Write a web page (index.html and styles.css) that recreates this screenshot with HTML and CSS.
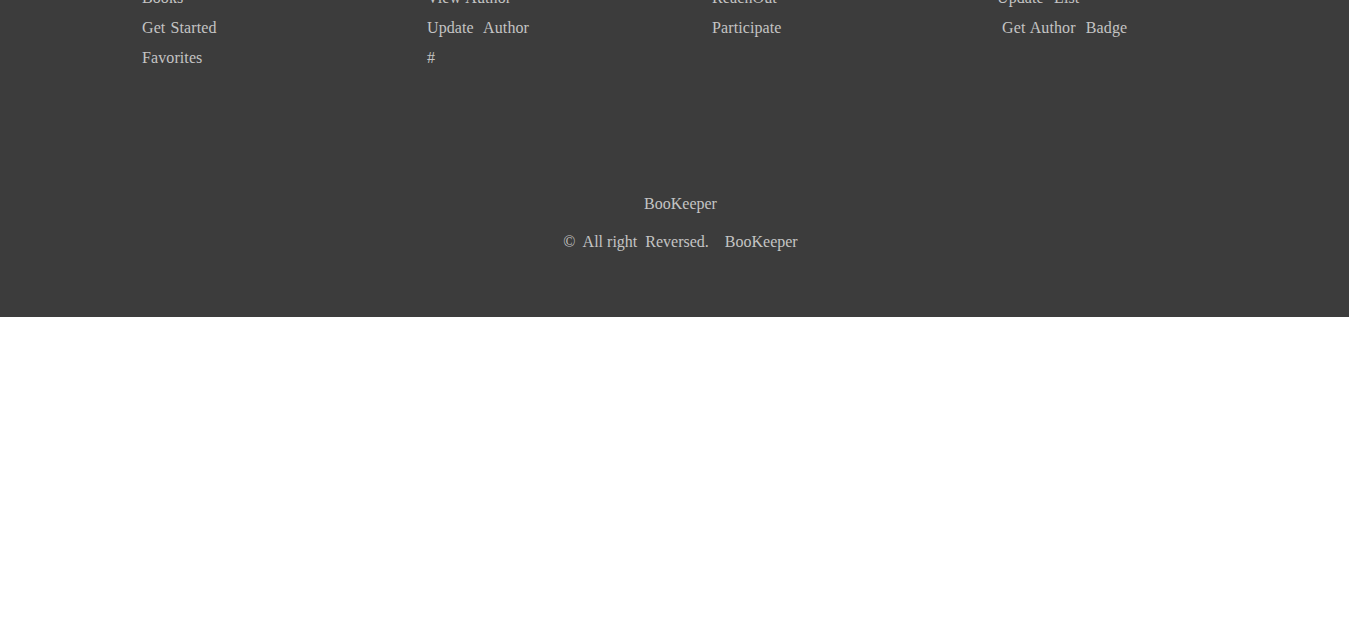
FILE: index.html
```html
<!DOCTYPE html>
<html lang="en">
<head>
<meta charset="utf-8">
<title>BooKeeper</title>
<link rel="stylesheet" href="styles.css">
</head>
<body>
<footer class="footer">
  <div class="links">
    <ul class="col">
      <li>Books</li>
      <li>Get Started</li>
      <li>Favorites</li>
    </ul>
    <ul class="col">
      <li>View Author</li>
      <li>Update&nbsp; Author</li>
      <li>#</li>
    </ul>
    <ul class="col">
      <li>ReachOut</li>
      <li>Participate</li>
    </ul>
    <ul class="col">
      <li>Update&nbsp; List</li>
      <li>&nbsp;Get Author&nbsp; Badge</li>
    </ul>
  </div>
  <div class="bottom">
    <p class="brand">BooKeeper</p>
    <p class="copy">&copy;&nbsp; All right&nbsp; Reversed. &nbsp;&nbsp; BooKeeper</p>
  </div>
</footer>
</body>
</html>
```
FILE: styles.css
```css
html, body {
  margin: 0;
  padding: 0;
  background: #ffffff;
}
body {
  font-family: "Liberation Serif", "Times New Roman", serif;
  font-size: 16px;
  color: #c4c4c4;
}
.footer {
  background: #3c3c3c;
  margin-top: -17px;
  padding-bottom: 60px;
}
.links {
  display: grid;
  grid-template-columns: repeat(4, 285px);
  justify-content: center;
  padding-left: 75px;
}
.col {
  list-style: none;
  margin: 0;
  padding: 0;
  word-spacing: 1px;
  letter-spacing: 0.1px;
}
.col li {
  line-height: 30px;
  height: 30px;
}
.bottom {
  margin-top: 116px;
  padding-left: 12px;
  text-align: center;
}
.brand {
  margin: 0;
  line-height: 30px;
}
.copy {
  margin: 8px 0 0;
  line-height: 30px;
}
```
